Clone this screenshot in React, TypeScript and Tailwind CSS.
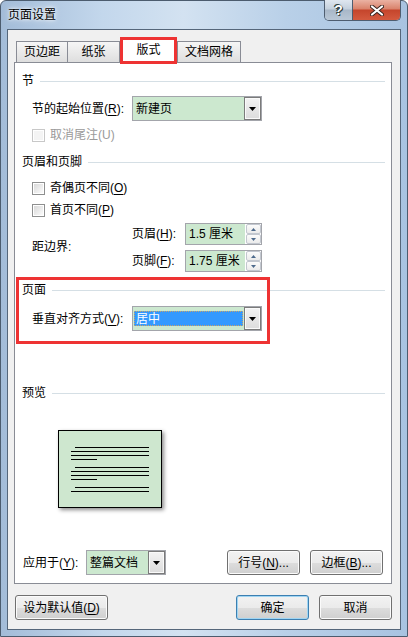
import React from 'react';

// accelerator letter
const Acc: React.FC<{ k: string }> = ({ k }) => <span className="underline underline-offset-[2px]">{k}</span>;

const DownArrow = () => (
  <svg width="7" height="4" viewBox="0 0 7 4">
    <path d="M0 0h7L3.5 4z" fill="#000" />
  </svg>
);

const SectionHeader: React.FC<{ title: string }> = ({ title }) => (
  <div className="flex items-center h-4">
    <span>{title}</span>
    <div className="flex-1 h-px bg-[#d5dfe5] ml-[6px]" />
  </div>
);

const CheckBox: React.FC<{ children: React.ReactNode; disabled?: boolean }> = ({ children, disabled }) => (
  <div className="flex items-center h-4 pl-[10px]">
    <span
      className={`w-[13px] h-[13px] border p-px bg-white ${disabled ? 'border-[#c8c8c8]' : 'border-[#8e8f8f]'}`}
    >
      <span
        className={`block w-full h-full ${
          disabled ? 'bg-[#f4f4f4]' : 'bg-gradient-to-br from-[#d9d9d9] to-[#fbfbfb]'
        }`}
      />
    </span>
    <span className={`ml-[5px] ${disabled ? 'text-[#9a9a9a]' : ''}`}>{children}</span>
  </div>
);

const Combo: React.FC<{ className: string; text: string; selected?: boolean }> = ({ className, text, selected }) => (
  <div className={`${className} flex border border-[#a3a5ab] bg-[#cce8cf]`}>
    {selected ? (
      <div className="flex-1 flex items-center pl-px pr-px">
        <div className="w-full h-[15px] bg-[#3399ff] border border-dotted border-[#c9a16a] text-white flex items-center pl-px">
          {text}
        </div>
      </div>
    ) : (
      <div className="flex-1 flex items-center pl-[3px]">{text}</div>
    )}
    <div className="w-[17px] border border-[#7b7b7b] shadow-[inset_0_0_0_1px_#fafafa] bg-gradient-to-b from-[#f3f3f3] to-[#dcdcdc] flex items-center justify-center">
      <DownArrow />
    </div>
  </div>
);

const SpinArrow: React.FC<{ up?: boolean }> = ({ up }) => (
  <svg width="5" height="3" viewBox="0 0 5 3">
    <path d={up ? 'M0 3h5L2.5 0z' : 'M0 0h5L2.5 3z'} fill="#4d6a8c" />
  </svg>
);

const Spin: React.FC<{ value: string }> = ({ value }) => (
  <div className="w-[77px] h-[22px] border border-[#a3a5ab] bg-white flex">
    <div className="flex-1 bg-[#cce8cf] flex items-center pl-[3px] mr-px">{value}</div>
    <div className="w-[15px] flex flex-col">
      <div className="flex-1 flex items-center justify-center border border-[#c2c7cf] rounded-[2px] bg-gradient-to-b from-[#fbfbfb] to-[#ebebeb]">
        <SpinArrow up />
      </div>
      <div className="flex-1 flex items-center justify-center border border-[#c2c7cf] rounded-[2px] bg-gradient-to-b from-[#fbfbfb] to-[#ebebeb]">
        <SpinArrow />
      </div>
    </div>
  </div>
);

const Btn: React.FC<{ className: string; focused?: boolean; children: React.ReactNode }> = ({
  className,
  focused,
  children,
}) => (
  <div
    className={`${className} h-[25px] flex items-center justify-center rounded-[3px] border bg-[linear-gradient(#f2f2f2_0%,#ebebeb_50%,#dddddd_51%,#cfcfcf_100%)] ${
      focused
        ? 'border-[#3c7fb1] shadow-[inset_0_0_0_1px_#9fd5f3]'
        : 'border-[#707070] shadow-[inset_0_0_0_1px_#fbfbfb]'
    }`}
  >
    {children}
  </div>
);

const PreviewPage = () => {
  const lines = [
    [16, 16], [20, 12], [24, 12], [28, 12, 26],
    [36, 16], [40, 12], [44, 12], [48, 12, 26],
    [56, 16], [60, 12],
  ];
  return (
    <svg width="102" height="76" viewBox="0 0 102 76">
      {lines.map(([y, x, w], i) => (
        <rect key={i} x={x} y={y} width={w ?? 90 - x} height="1" fill="#000" />
      ))}
    </svg>
  );
};

export default function App() {
  return (
    <div className="w-[408px] h-[637px] flex flex-col border border-[#4c5c6e] rounded-t-[6px] bg-[linear-gradient(90deg,#a3bcd8,#c3d7ec_25%,#d3e2f1_45%,#b9d0e8_70%,#a8c3e1)] font-['Liberation_Sans','Noto_Sans_CJK_SC',sans-serif] text-[12px] leading-4 text-black">
      {/* Title bar */}
      <div className="h-[28px] flex items-start justify-between pl-[7px] pr-[6px]">
        <div className="h-full flex items-center [text-shadow:0_0_6px_#fff,0_0_3px_#fff]">页面设置</div>
        <div className="-mt-px flex border border-t-0 border-[#4e5d70] rounded-b-[5px] overflow-hidden">
          <div className="w-[28px] h-[20px] flex items-center justify-center border-r border-[#4e5d70] bg-[linear-gradient(#dfe7f0_0%,#c4d0dd_45%,#a8b7c8_50%,#b9c7d6_100%)] text-white font-bold text-[14px] [text-shadow:0_0_1px_#233,1px_1px_0_#344,-1px_-1px_0_#344]">
            ?
          </div>
          <div className="w-[47px] h-[20px] flex items-center justify-center bg-[linear-gradient(#eab2a3_0%,#d9826b_45%,#c5452c_50%,#d45a3f_100%)]">
            <svg width="14" height="11" viewBox="0 0 14 11">
              <path d="M2 1.5l10 8M12 1.5l-10 8" stroke="#3a2520" strokeWidth="4" strokeLinecap="round" />
              <path d="M2 1.5l10 8M12 1.5l-10 8" stroke="#fff" strokeWidth="2.2" strokeLinecap="round" />
            </svg>
          </div>
        </div>
      </div>

      {/* Client area */}
      <div className="flex-1 mx-[6px] mb-[6px] border border-[#55667a] bg-[#f0f0f0] flex flex-col pt-[7px]">
        {/* Tabs */}
        <div className="ml-[8px] h-[25px] flex items-end relative z-10">
          <div className="w-[52px] h-[21px] flex items-center justify-center border border-b-0 border-[#898c95] bg-gradient-to-b from-[#f6f6f6] to-[#dedede]">
            页边距
          </div>
          <div className="-ml-px w-[53px] h-[21px] flex items-center justify-center border border-b-0 border-[#898c95] bg-gradient-to-b from-[#f6f6f6] to-[#dedede]">
            纸张
          </div>
          <div className="w-[57px] h-[27px] -mb-[2px] flex items-center justify-center border-[3px] border-[#ee3333] bg-white pb-[2px]">
            版式
          </div>
          <div className="w-[64px] h-[21px] flex items-center justify-center border border-b-0 border-[#898c95] bg-gradient-to-b from-[#f6f6f6] to-[#dedede]">
            文档网格
          </div>
        </div>

        {/* Panel */}
        <div className="ml-[6px] mr-[8px] h-[522px] border border-[#898c95] bg-white pl-[7px] pr-[6px] pt-[10px] flex flex-col">
          <SectionHeader title="节" />
          <div className="mt-[7px] flex items-center pl-[10px]">
            <span className="w-[100px]">
              节的起始位置(<Acc k="R" />):
            </span>
            <Combo className="w-[130px] h-[25px]" text="新建页" />
          </div>
          <div className="mt-[6px]">
            <CheckBox disabled>取消尾注(U)</CheckBox>
          </div>

          <div className="mt-[11px]">
            <SectionHeader title="页眉和页脚" />
          </div>
          <div className="mt-[10px]">
            <CheckBox>
              奇偶页不同(<Acc k="O" />)
            </CheckBox>
          </div>
          <div className="mt-[6px]">
            <CheckBox>
              首页不同(<Acc k="P" />)
            </CheckBox>
          </div>
          <div className="mt-[5px] flex pl-[10px]">
            <div className="w-[100px] flex items-center pb-[2px]">距边界:</div>
            <div className="flex flex-col gap-[5px]">
              <div className="flex items-center">
                <span className="w-[53px]">
                  页眉(<Acc k="H" />):
                </span>
                <Spin value="1.5 厘米" />
              </div>
              <div className="flex items-center">
                <span className="w-[53px]">
                  页脚(<Acc k="F" />):
                </span>
                <Spin value="1.75 厘米" />
              </div>
            </div>
          </div>

          <div className="relative mt-[10px]">
            <SectionHeader title="页面" />
            <div className="mt-[8px] flex items-center pl-[10px]">
              <span className="w-[100px]">
                垂直对齐方式(<Acc k="V" />):
              </span>
              <Combo className="w-[130px] h-[25px]" text="居中" selected />
            </div>
            <div className="absolute left-[-6px] top-[-5px] w-[254px] h-[67px] border-[3px] border-[#ee3333] pointer-events-none" />
          </div>

          <div className="mt-[54px]">
            <SectionHeader title="预览" />
          </div>
          <div className="mt-[29px] ml-[36px] w-[104px] h-[78px] border border-black bg-[#cee7cf] shadow-[2px_2px_4px_rgba(0,0,0,0.45)]">
            <PreviewPage />
          </div>

          <div className="mt-[42px] flex items-center pl-px">
            <span className="w-[63px]">
              应用于(<Acc k="Y" />):
            </span>
            <Combo className="w-[80px] h-[25px]" text="整篇文档" />
            <Btn className="ml-[61px] w-[73px]">
              行号(<Acc k="N" />)...
            </Btn>
            <Btn className="ml-[10px] w-[73px]">
              边框(<Acc k="B" />)...
            </Btn>
          </div>
        </div>

        {/* Dialog buttons */}
        <div className="mt-[11px] flex pl-[7px] pr-[8px]">
          <Btn className="w-[93px]">
            设为默认值(<Acc k="D" />)
          </Btn>
          <Btn className="ml-auto w-[73px]" focused>
            确定
          </Btn>
          <Btn className="ml-[10px] w-[73px]">取消</Btn>
        </div>
      </div>
    </div>
  );
}
